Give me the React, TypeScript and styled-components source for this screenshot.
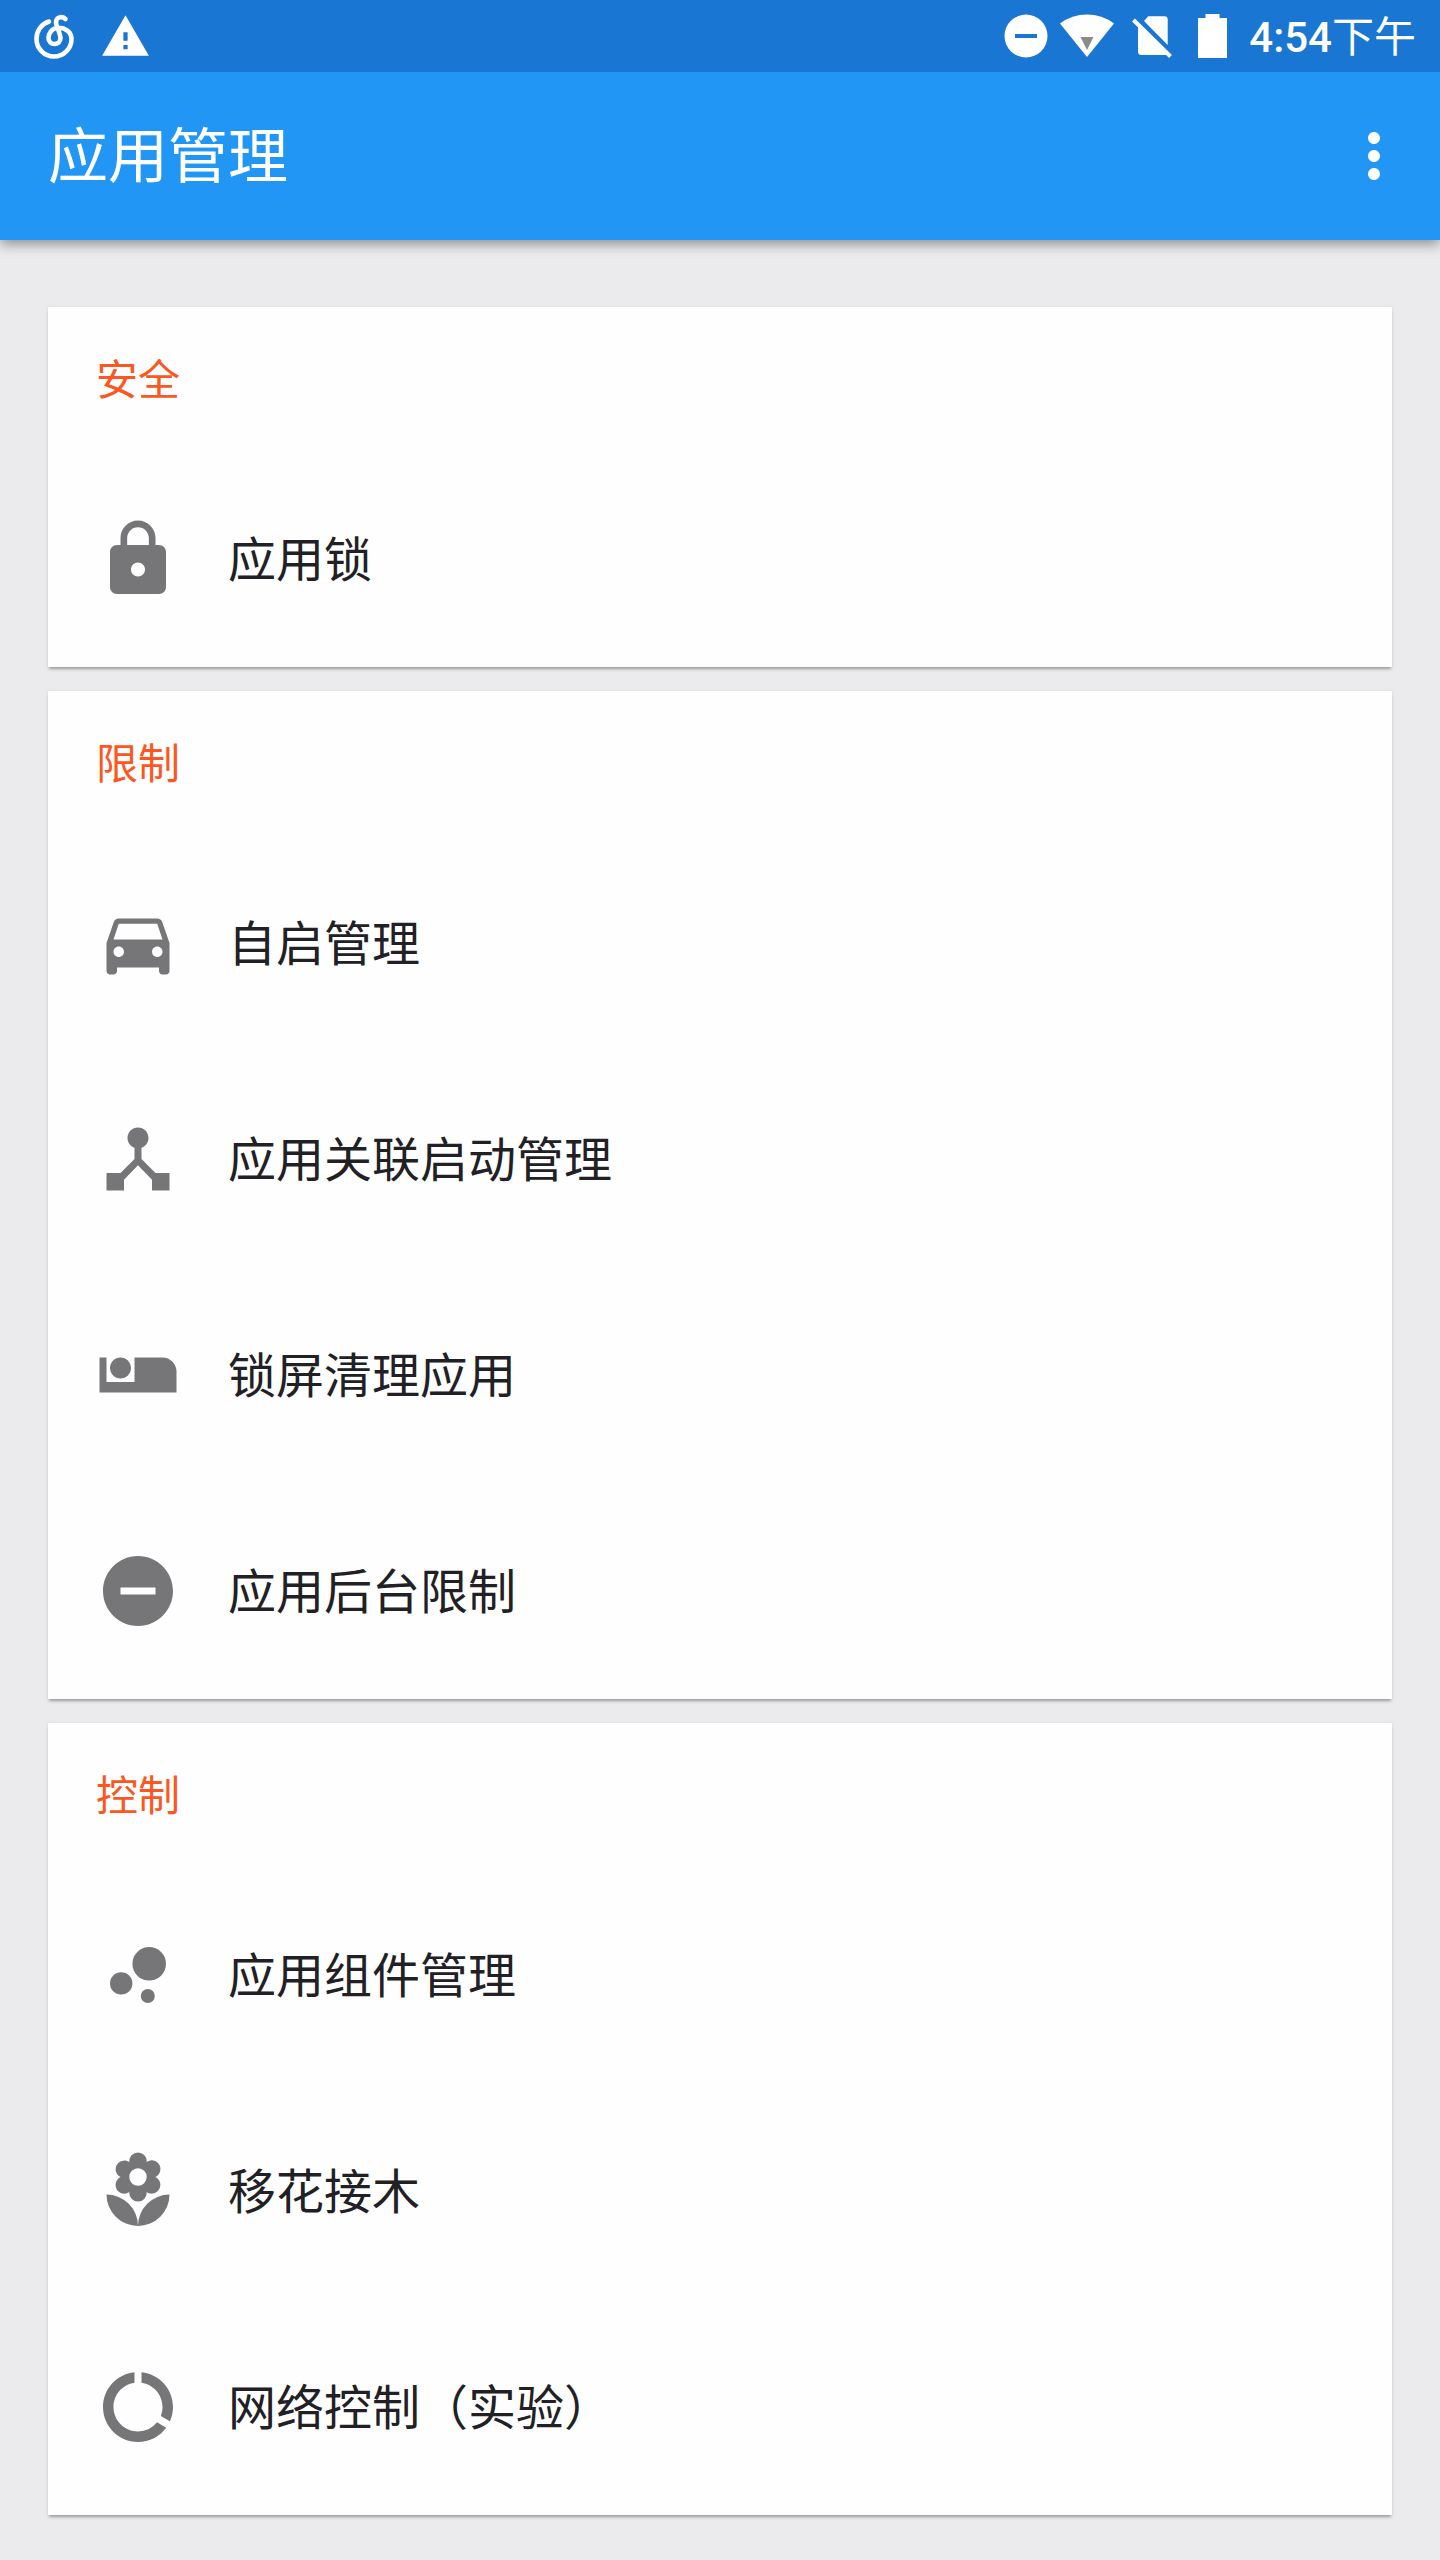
import React from "react";
import styled, { createGlobalStyle } from "styled-components";
import type { IconType } from "react-icons";
import {
  MdAirlineSeatIndividualSuite,
  MdBubbleChart,
  MdDataUsage,
  MdDeviceHub,
  MdDirectionsCar,
  MdLocalFlorist,
  MdLock,
  MdMoreVert,
  MdRemoveCircle,
  MdWarning,
} from "react-icons/md";

const GlobalStyle = createGlobalStyle`
  *, *::before, *::after { box-sizing: border-box; }
  body {
    margin: 0;
    background: #ebeaed;
    color: #212024;
    font-family: Roboto, "Noto Sans CJK SC", sans-serif;
  }
`;

const TopBars = styled.div`
  color: #fff;
  box-shadow: 0 4px 12px rgba(0, 0, 0, 0.4);
`;

const StatusBar = styled.div`
  display: flex;
  align-items: center;
  justify-content: space-between;
  height: 72px;
  padding: 0 24px 0 28px;
  background: #1976d2;
`;

const StatusGroup = styled.div<{ $gap: number }>`
  display: flex;
  align-items: center;
  gap: ${(p) => p.$gap}px;

  svg {
    display: block;
    flex: none;
  }
`;

const Clock = styled.time`
  padding-top: 4px;
  font-size: 42px;
  line-height: 48px;
  white-space: nowrap;
`;

const Digits = styled.span`
  font-weight: 500;
`;

const AppBar = styled.header`
  display: flex;
  align-items: center;
  justify-content: space-between;
  height: 168px;
  padding: 0 30px 0 48px;
  background: #2196f5;
`;

const Title = styled.h1`
  margin: 0;
  padding-top: 4px;
  font-size: 60px;
  font-weight: 400;
  line-height: 72px;
`;

const MenuButton = styled.button`
  display: flex;
  padding: 0;
  border: 0;
  background: none;
  color: inherit;
  font-size: 72px;
  cursor: pointer;
`;

const Content = styled.main`
  display: flex;
  flex-direction: column;
  gap: 24px;
  padding: 67px 48px 45px;
`;

const Card = styled.section`
  background: #fefefe;
  box-shadow: 0 3px 3px -1px rgba(0, 0, 0, 0.34), 0 0 2px rgba(0, 0, 0, 0.06);
`;

const CardTitle = styled.h2`
  margin: 0;
  padding: 50px 48px 46px;
  color: #fb5722;
  font-size: 42px;
  font-weight: 400;
  line-height: 48px;
`;

const List = styled.ul`
  margin: 0;
  padding: 0;
  list-style: none;
`;

const Row = styled.button`
  display: flex;
  align-items: center;
  gap: 48px;
  width: 100%;
  height: 216px;
  padding: 0 48px;
  border: 0;
  background: none;
  color: inherit;
  font: inherit;
  font-size: 48px;
  line-height: 60px;
  text-align: left;
  cursor: pointer;
`;

const RowIcon = styled.span`
  display: flex;
  flex: none;
  color: #767578;
  font-size: 84px;
`;

const RowLabel = styled.span`
  padding-top: 4px;
`;

function MusicIcon() {
  return (
    <svg width="52" height="52" viewBox="0 0 52 52" fill="none" stroke="#fff" strokeWidth="4.6" strokeLinecap="round" aria-hidden="true">
      <path d="M21 11.500C13 14 8.500 21 8.500 29A17.500 17.500 0 0 0 43.500 29C43.500 22 37 17.500 30 17.800C24 18.200 20.500 23 20.500 28C20.500 36 32.500 36 32.500 28C32.500 24 28 15.500 28 12.500C28 6.500 34 6 37.500 9" />
    </svg>
  );
}

function DoNotDisturbIcon() {
  return (
    <svg width="44" height="44" viewBox="0 0 44 44" aria-hidden="true">
      <circle cx="22" cy="22" r="21.500" fill="#fff" />
      <path d="M11 20h22v4H11z" fill="#1976d2" />
    </svg>
  );
}

function WifiIcon() {
  return (
    <svg width="54" height="44" viewBox="0 0 54 44" aria-hidden="true">
      <path d="M0 9.500Q12 .5 27 .5T54 9.500L27 43z" fill="#fff" />
      <path d="M20.500 23h13L27 36z" fill="#8b8b8b" />
    </svg>
  );
}

function NoSimIcon() {
  return (
    <svg width="40" height="44" viewBox="0 0 40 44" aria-hidden="true">
      <path d="M12 7l4.300-4.700H32.500a3.200 3.200 0 0 1 3.200 3.200V31z" fill="#fff" />
      <path d="M6 10L36 40.500L34 41H9.500A3.500 3.500 0 0 1 6 37.500z" fill="#fff" />
      <path d="M1.500 6L38.500 42.500" stroke="#fff" strokeWidth="4" />
    </svg>
  );
}

function BatteryIcon() {
  return (
    <svg width="29" height="44" viewBox="0 0 29 44" aria-hidden="true">
      <path d="M7.500 0h14v4H29v40H0V4h7.500z" fill="#fff" />
    </svg>
  );
}

const sections: { title: string; items: { label: string; icon: IconType }[] }[] = [
  { title: "安全", items: [{ label: "应用锁", icon: MdLock }] },
  {
    title: "限制",
    items: [
      { label: "自启管理", icon: MdDirectionsCar },
      { label: "应用关联启动管理", icon: MdDeviceHub },
      { label: "锁屏清理应用", icon: MdAirlineSeatIndividualSuite },
      { label: "应用后台限制", icon: MdRemoveCircle },
    ],
  },
  {
    title: "控制",
    items: [
      { label: "应用组件管理", icon: MdBubbleChart },
      { label: "移花接木", icon: MdLocalFlorist },
      { label: "网络控制（实验）", icon: MdDataUsage },
    ],
  },
];

export default function App() {
  return (
    <>
      <GlobalStyle />
      <TopBars lang="zh-CN">
        <StatusBar>
          <StatusGroup $gap={20}>
            <MusicIcon />
            <MdWarning size={51} />
          </StatusGroup>
          <StatusGroup $gap={22}>
            <StatusGroup $gap={18}>
              <StatusGroup $gap={12}>
                <DoNotDisturbIcon />
                <WifiIcon />
              </StatusGroup>
              <StatusGroup $gap={26}>
                <NoSimIcon />
                <BatteryIcon />
              </StatusGroup>
            </StatusGroup>
            <Clock dateTime="16:54">
              <Digits>4:54</Digits>下午
            </Clock>
          </StatusGroup>
        </StatusBar>
        <AppBar>
          <Title>应用管理</Title>
          <MenuButton type="button" aria-label="更多选项">
            <MdMoreVert />
          </MenuButton>
        </AppBar>
      </TopBars>
      <Content lang="zh-CN">
        {sections.map((section) => (
          <Card key={section.title}>
            <CardTitle>{section.title}</CardTitle>
            <List>
              {section.items.map(({ label, icon: Icon }) => (
                <li key={label}>
                  <Row type="button">
                    <RowIcon>
                      <Icon />
                    </RowIcon>
                    <RowLabel>{label}</RowLabel>
                  </Row>
                </li>
              ))}
            </List>
          </Card>
        ))}
      </Content>
    </>
  );
}
